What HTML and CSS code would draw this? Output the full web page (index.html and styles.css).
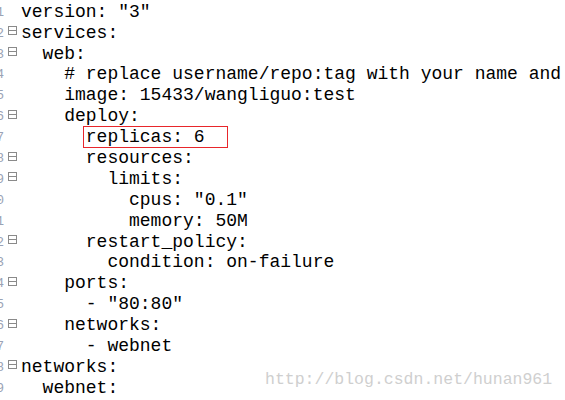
FILE: index.html
```html
<!DOCTYPE html>
<html>
<head>
<meta charset="utf-8">
<link rel="stylesheet" href="styles.css">
</head>
<body>
<div class="editor">
  <div class="row"><span class="num">1</span><span class="fold"></span><span class="code">version: "3"</span></div>
  <div class="row"><span class="num">2</span><span class="fold"><i class="box"></i></span><span class="code">services:</span></div>
  <div class="row"><span class="num">3</span><span class="fold"><i class="box"></i></span><span class="code">  web:</span></div>
  <div class="row"><span class="num">4</span><span class="fold"></span><span class="code">    # replace username/repo:tag with your name and image details</span></div>
  <div class="row"><span class="num">5</span><span class="fold"></span><span class="code">    image: 15433/wangliguo:test</span></div>
  <div class="row"><span class="num">6</span><span class="fold"><i class="box"></i></span><span class="code">    deploy:</span></div>
  <div class="row"><span class="num">7</span><span class="fold"></span><span class="code">      <span class="mark">replicas: 6</span></span></div>
  <div class="row"><span class="num">8</span><span class="fold"><i class="box"></i></span><span class="code">      resources:</span></div>
  <div class="row"><span class="num">9</span><span class="fold"><i class="box"></i></span><span class="code">        limits:</span></div>
  <div class="row"><span class="num">10</span><span class="fold"></span><span class="code">          cpus: "0.1"</span></div>
  <div class="row"><span class="num">11</span><span class="fold"></span><span class="code">          memory: 50M</span></div>
  <div class="row"><span class="num">12</span><span class="fold"><i class="box"></i></span><span class="code">      restart_policy:</span></div>
  <div class="row"><span class="num">13</span><span class="fold"></span><span class="code">        condition: on-failure</span></div>
  <div class="row"><span class="num">14</span><span class="fold"><i class="box"></i></span><span class="code">    ports:</span></div>
  <div class="row"><span class="num">15</span><span class="fold"></span><span class="code">      - "80:80"</span></div>
  <div class="row"><span class="num">16</span><span class="fold"><i class="box"></i></span><span class="code">    networks:</span></div>
  <div class="row"><span class="num">17</span><span class="fold"></span><span class="code">      - webnet</span></div>
  <div class="row"><span class="num">18</span><span class="fold"><i class="box"></i></span><span class="code">networks:</span></div>
  <div class="row"><span class="num">19</span><span class="fold"></span><span class="code">  webnet:</span></div>
</div>
<div class="watermark">http://blog.csdn.net/hunan961</div>
</body>
</html>
```

FILE: styles.css
```css
html, body {
  margin: 0;
  padding: 0;
  background: #fff;
  width: 565px;
  height: 400px;
  overflow: hidden;
}
body {
  position: relative;
}
.editor {
  padding-top: 1.8px;
  display: flex;
  flex-direction: column;
}
.row {
  display: flex;
  height: 20.9px;
  align-items: stretch;
  white-space: nowrap;
}
.num {
  width: 4px;
  flex: none;
  overflow: hidden;
  display: flex;
  justify-content: flex-end;
  align-items: center;
  font-family: "Liberation Mono", monospace;
  font-size: 13px;
  color: #9aa3b5;
}
.fold {
  width: 17px;
  flex: none;
  position: relative;
}
.box {
  position: absolute;
  left: 4px;
  top: 3.5px;
  width: 7px;
  height: 7px;
  border: 1px solid #8a8a8a;
  box-sizing: content-box;
}
.box::after {
  content: "";
  position: absolute;
  left: 0;
  right: 0;
  top: 3px;
  height: 1px;
  background: #8a8a8a;
}
.code {
  font-family: "Liberation Mono", "Courier New", monospace;
  font-size: 18px;
  line-height: 20.9px;
  color: #000;
  white-space: pre;
}
.mark {
  display: inline-block;
  height: 20px;
  margin-left: -1.5px;
  padding-left: 1.5px;
  padding-right: 22px;
  outline: 1.5px solid #e8262b;
  outline-offset: 0;
}
.watermark {
  position: absolute;
  left: 265px;
  top: 370px;
  font-family: "Liberation Mono", monospace;
  font-size: 16.5px;
  color: #cfcfcf;
  white-space: nowrap;
}
```
